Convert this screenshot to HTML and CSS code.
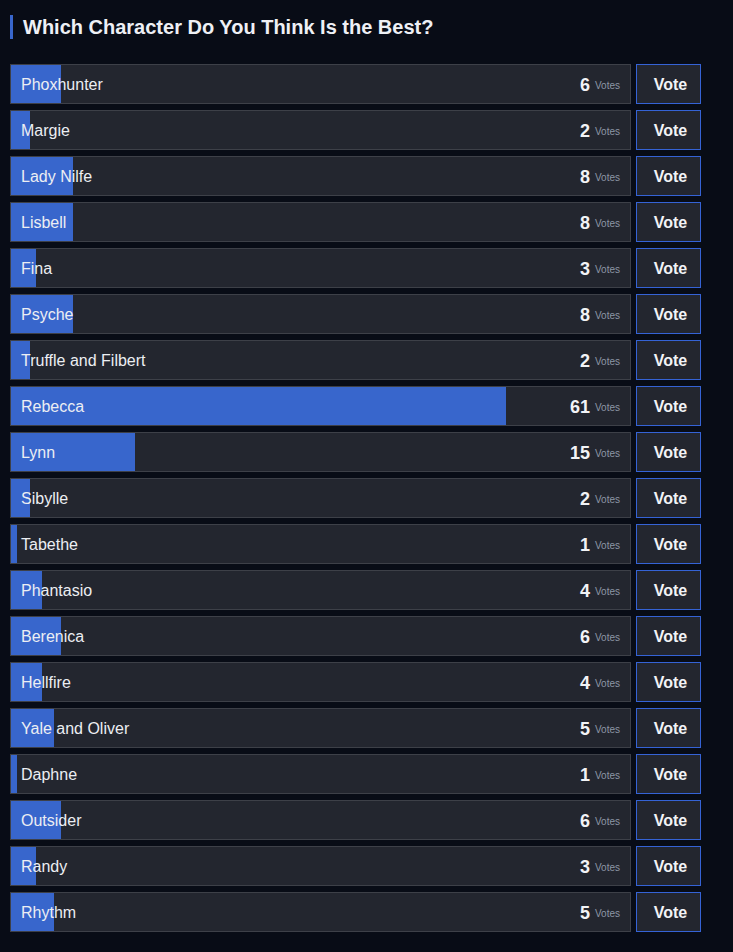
FILE: index.html
```html
<!DOCTYPE html>
<html>
<head>
<meta charset="utf-8">
<link rel="stylesheet" href="styles.css">
</head>
<body>
<div class="poll">
  <h1 class="title">Which Character Do You Think Is the Best?</h1>
  <div class="rows">
    <div class="row"><div class="bar" style="--p:8.08%"><span class="name">Phoxhunter</span><span class="count"><b>6</b><small>Votes</small></span></div><button class="vote">Vote</button></div>
    <div class="row"><div class="bar" style="--p:3.07%"><span class="name">Margie</span><span class="count"><b>2</b><small>Votes</small></span></div><button class="vote">Vote</button></div>
    <div class="row"><div class="bar" style="--p:10.02%"><span class="name">Lady Nilfe</span><span class="count"><b>8</b><small>Votes</small></span></div><button class="vote">Vote</button></div>
    <div class="row"><div class="bar" style="--p:10.02%"><span class="name">Lisbell</span><span class="count"><b>8</b><small>Votes</small></span></div><button class="vote">Vote</button></div>
    <div class="row"><div class="bar" style="--p:4.04%"><span class="name">Fina</span><span class="count"><b>3</b><small>Votes</small></span></div><button class="vote">Vote</button></div>
    <div class="row"><div class="bar" style="--p:10.02%"><span class="name">Psyche</span><span class="count"><b>8</b><small>Votes</small></span></div><button class="vote">Vote</button></div>
    <div class="row"><div class="bar" style="--p:3.07%"><span class="name">Truffle and Filbert</span><span class="count"><b>2</b><small>Votes</small></span></div><button class="vote">Vote</button></div>
    <div class="row"><div class="bar" style="--p:79.97%"><span class="name">Rebecca</span><span class="count"><b>61</b><small>Votes</small></span></div><button class="vote">Vote</button></div>
    <div class="row"><div class="bar" style="--p:20.03%"><span class="name">Lynn</span><span class="count"><b>15</b><small>Votes</small></span></div><button class="vote">Vote</button></div>
    <div class="row"><div class="bar" style="--p:3.07%"><span class="name">Sibylle</span><span class="count"><b>2</b><small>Votes</small></span></div><button class="vote">Vote</button></div>
    <div class="row"><div class="bar" style="--p:0.97%"><span class="name">Tabethe</span><span class="count"><b>1</b><small>Votes</small></span></div><button class="vote">Vote</button></div>
    <div class="row"><div class="bar" style="--p:5.01%"><span class="name">Phantasio</span><span class="count"><b>4</b><small>Votes</small></span></div><button class="vote">Vote</button></div>
    <div class="row"><div class="bar" style="--p:8.08%"><span class="name">Berenica</span><span class="count"><b>6</b><small>Votes</small></span></div><button class="vote">Vote</button></div>
    <div class="row"><div class="bar" style="--p:5.01%"><span class="name">Hellfire</span><span class="count"><b>4</b><small>Votes</small></span></div><button class="vote">Vote</button></div>
    <div class="row"><div class="bar" style="--p:6.95%"><span class="name">Yale and Oliver</span><span class="count"><b>5</b><small>Votes</small></span></div><button class="vote">Vote</button></div>
    <div class="row"><div class="bar" style="--p:0.97%"><span class="name">Daphne</span><span class="count"><b>1</b><small>Votes</small></span></div><button class="vote">Vote</button></div>
    <div class="row"><div class="bar" style="--p:8.08%"><span class="name">Outsider</span><span class="count"><b>6</b><small>Votes</small></span></div><button class="vote">Vote</button></div>
    <div class="row"><div class="bar" style="--p:4.04%"><span class="name">Randy</span><span class="count"><b>3</b><small>Votes</small></span></div><button class="vote">Vote</button></div>
    <div class="row"><div class="bar" style="--p:6.95%"><span class="name">Rhythm</span><span class="count"><b>5</b><small>Votes</small></span></div><button class="vote">Vote</button></div>
  </div>
</div>
</body>
</html>
```
FILE: styles.css
```css
html, body {
  margin: 0;
  padding: 0;
  background: #080c16;
}
body {
  font-family: "Liberation Sans", Arial, sans-serif;
  color: #eceef3;
}
.poll {
  width: 691px;
  padding: 15px 0 0 10px;
}
.title {
  margin: 0 0 25px 0;
  border-left: 3px solid #3866cc;
  padding-left: 10px;
  font-size: 20px;
  line-height: 24px;
  font-weight: bold;
  color: #eef0f5;
}
.rows {
  display: flex;
  flex-direction: column;
  gap: 6px;
}
.row {
  display: grid;
  grid-template-columns: 1fr 65px;
  gap: 5px;
  height: 40px;
}
.bar {
  box-sizing: border-box;
  border: 1px solid #3d4048;
  background: linear-gradient(to right, #3866cc var(--p), #23262f var(--p));
  display: flex;
  align-items: center;
  justify-content: space-between;
  padding: 2px 10px 0 10px;
}
.name {
  font-size: 16px;
  color: #eceef3;
}
.count {
  white-space: nowrap;
}
.count b {
  font-size: 18px;
  font-weight: bold;
  color: #f2f3f6;
}
.count small {
  font-size: 10px;
  color: #8d96a6;
  margin-left: 5px;
  vertical-align: 2px;
}
.vote {
  box-sizing: border-box;
  margin: 0;
  border: 1px solid #3563d6;
  background: #23262f;
  color: #f2f3f6;
  font-family: "Liberation Sans", Arial, sans-serif;
  font-size: 16px;
  font-weight: bold;
  padding: 2px 0 0 4px;
  cursor: pointer;
}
```
